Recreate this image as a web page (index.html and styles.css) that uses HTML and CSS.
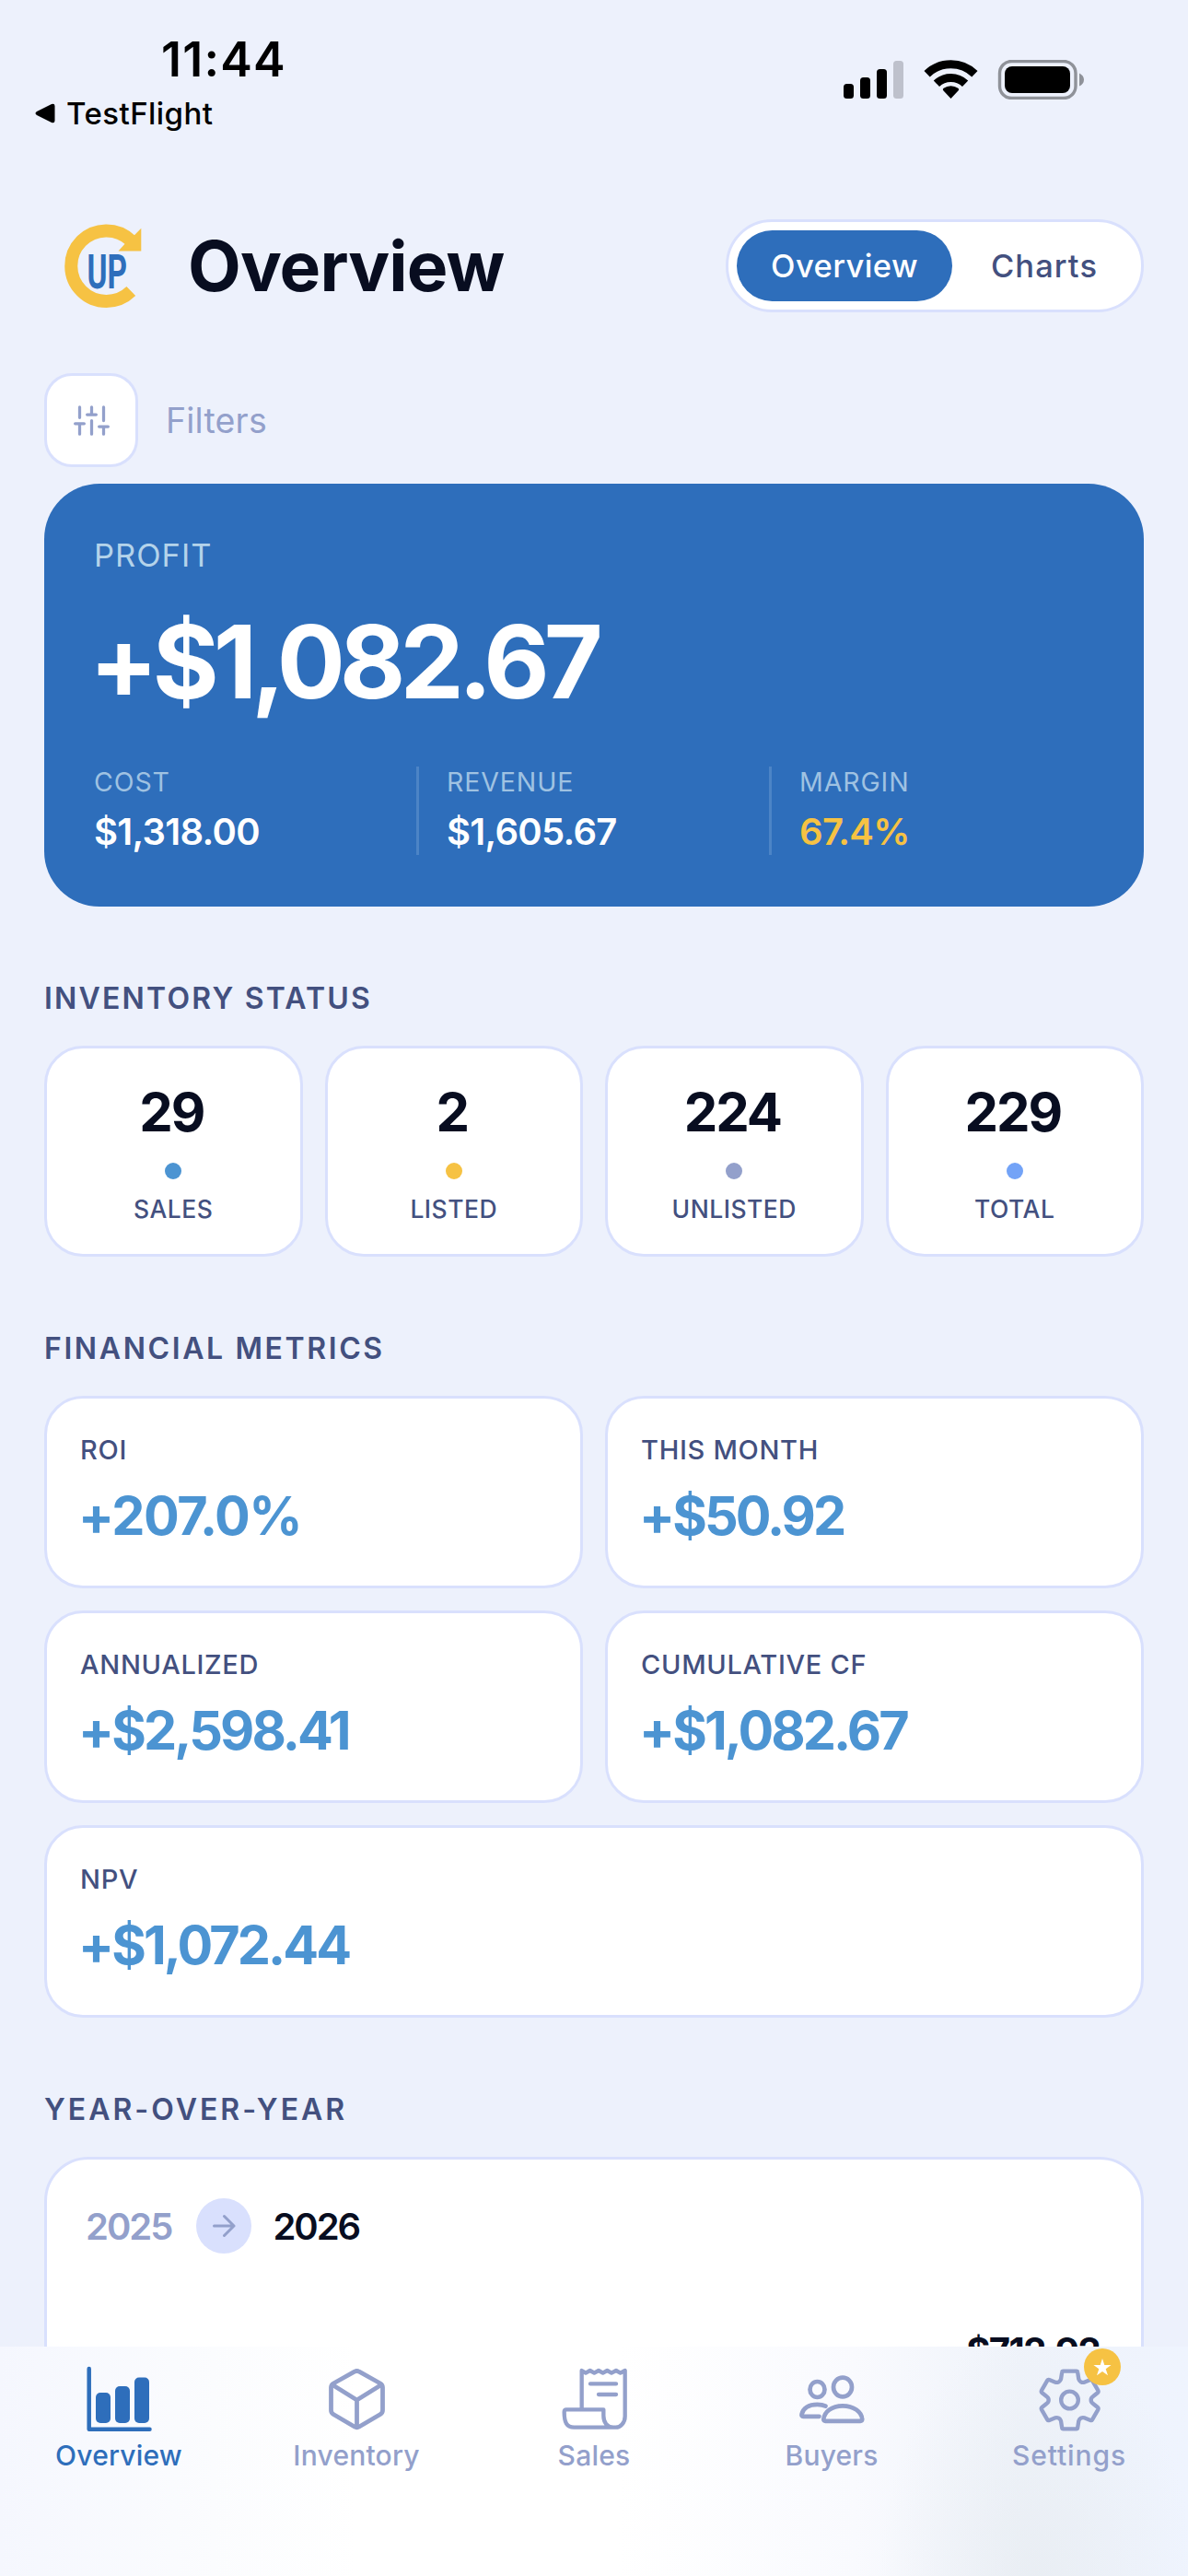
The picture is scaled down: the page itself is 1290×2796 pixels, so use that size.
FILE: index.html
```html
<!DOCTYPE html>
<html lang="en">
<head>
    <meta charset="UTF-8">
    <meta name="viewport" content="width=device-width, initial-scale=1.0">
    <title>Overview</title>
    <link rel="stylesheet" href="styles.css">
</head>
<body>
    <div class="screen">
        <div class="status-bar">
            <div class="status-left">
                <div class="status-time">11:44</div>
                <div class="status-back">
                    <svg width="22" height="22" viewBox="0 0 22 22"><path d="M2 9 L18 1 Q21.5 0 21.5 3 V19 Q21.5 22 18 21 L2 13 Q-1 11 2 9Z"/></svg>
                    <span>TestFlight</span>
                </div>
            </div>
            <svg class="status-icons" width="262" height="43" viewBox="0 0 262 43">
                <!-- signal -->
                <rect x="0" y="26" width="11" height="16" rx="3.5"/>
                <rect x="18" y="19" width="11" height="23" rx="3.5"/>
                <rect x="36" y="10" width="11" height="32" rx="3.5"/>
                <rect x="54" y="1" width="11" height="41" rx="3.5" fill="#bec1cc"/>
                <!-- wifi -->
                <path d="M90.6 15.2 A37.3 37.3 0 0 1 142.4 15.2" fill="none" stroke="#000" stroke-width="9"/>
                <path d="M100.9 25.8 A22.5 22.5 0 0 1 132.1 25.8" fill="none" stroke="#000" stroke-width="9"/>
                <path d="M116.5 42 L108.3 33.3 Q107 32 108.6 30.8 A13.3 13.3 0 0 1 124.4 30.8 Q126 32 124.7 33.3Z"/>
                <!-- battery -->
                <rect x="169.5" y="1.5" width="82.5" height="40" rx="13" fill="none" stroke="#8f9299" stroke-width="3.4"/>
                <rect x="175" y="7" width="71" height="29" rx="8"/>
                <path d="M256 14.5 Q261 17 261 21.5 Q261 26 256 28.5Z" fill="#8f9299"/>
            </svg>
        </div>

        <header class="header">
            <svg class="logo" width="96" height="96" viewBox="6 10.5 96 96">
                <path d="M82 30.5 A38.3 38.3 0 1 0 82.3 85.6" fill="none" stroke="#f6c243" stroke-width="14"/>
                <path d="M93.3 17.3 V42 H68.5 L75.3 34.5 L85.7 25Z" fill="#f6c243"/>
                <text class="logo-text" x="34.5" y="82.7" textLength="43.5" lengthAdjust="spacingAndGlyphs">UP</text>
            </svg>
            <h1 class="title">Overview</h1>
            <div class="segment">
                <button class="segment-btn active">Overview</button>
                <button class="segment-btn">Charts</button>
            </div>
        </header>

        <main class="content">
            <div class="filters">
                <button class="filter-btn" aria-label="Filters">
                    <svg width="39" height="39" viewBox="0 0 24 24" fill="none" stroke="currentColor" stroke-width="2" stroke-linecap="round">
                        <path d="M4 21v-7M4 10V3M12 21v-9M12 8V3M20 21v-5M20 12V3M1 14h6M9 8h6M17 16h6"/>
                    </svg>
                </button>
                <span class="filter-label">Filters</span>
            </div>

            <section class="profit-card">
                <div class="profit-label">PROFIT</div>
                <div class="profit-value">+$1,082.67</div>
                <div class="profit-stats">
                    <div class="stat">
                        <div class="stat-label">COST</div>
                        <div class="stat-value">$1,318.00</div>
                    </div>
                    <div class="stat">
                        <div class="stat-label">REVENUE</div>
                        <div class="stat-value">$1,605.67</div>
                    </div>
                    <div class="stat">
                        <div class="stat-label">MARGIN</div>
                        <div class="stat-value gold">67.4%</div>
                    </div>
                </div>
            </section>

            <h2 class="section-title">INVENTORY STATUS</h2>
            <div class="inventory">
                <div class="card inv-card">
                    <div class="inv-value">29</div>
                    <span class="dot dot-sales"></span>
                    <div class="inv-label">SALES</div>
                </div>
                <div class="card inv-card">
                    <div class="inv-value">2</div>
                    <span class="dot dot-listed"></span>
                    <div class="inv-label">LISTED</div>
                </div>
                <div class="card inv-card">
                    <div class="inv-value">224</div>
                    <span class="dot dot-unlisted"></span>
                    <div class="inv-label">UNLISTED</div>
                </div>
                <div class="card inv-card">
                    <div class="inv-value">229</div>
                    <span class="dot dot-total"></span>
                    <div class="inv-label">TOTAL</div>
                </div>
            </div>

            <h2 class="section-title wide">FINANCIAL METRICS</h2>
            <div class="metrics">
                <div class="card metric">
                    <div class="metric-label">ROI</div>
                    <div class="metric-value percent">+207.0%</div>
                </div>
                <div class="card metric">
                    <div class="metric-label">THIS MONTH</div>
                    <div class="metric-value">+$50.92</div>
                </div>
                <div class="card metric">
                    <div class="metric-label">ANNUALIZED</div>
                    <div class="metric-value">+$2,598.41</div>
                </div>
                <div class="card metric">
                    <div class="metric-label">CUMULATIVE CF</div>
                    <div class="metric-value">+$1,082.67</div>
                </div>
                <div class="card metric full">
                    <div class="metric-label">NPV</div>
                    <div class="metric-value">+$1,072.44</div>
                </div>
            </div>

            <h2 class="section-title wider">YEAR-OVER-YEAR</h2>
            <div class="card year-card">
                <div class="years">
                    <span class="year-prev">2025</span>
                    <span class="year-arrow">
                        <svg width="30" height="30" viewBox="0 0 30 30" fill="none" stroke="currentColor" stroke-width="3" stroke-linecap="round" stroke-linejoin="round">
                            <path d="M4.5 15H26M15.5 4.5L26 15L15.5 25.5"/>
                        </svg>
                    </span>
                    <span class="year-next">2026</span>
                </div>
                <div class="year-value">$712.92</div>
            </div>
        </main>

        <nav class="tab-bar">
            <a class="tab active">
                <svg class="tab-icon" viewBox="0 0 72 72">
                    <path d="M3.7 3V68.7H69.5" fill="none" stroke="currentColor" stroke-width="4.5" stroke-linecap="round" stroke-linejoin="round"/>
                    <rect x="11" y="29" width="16" height="33" rx="5" fill="currentColor"/>
                    <rect x="32" y="22" width="16" height="40" rx="5" fill="currentColor"/>
                    <rect x="53" y="12.5" width="16" height="49.5" rx="5" fill="currentColor"/>
                </svg>
                <span class="tab-label">Overview</span>
            </a>
            <a class="tab">
                <svg class="tab-icon" viewBox="0 0 72 72" fill="none" stroke="currentColor" stroke-width="4.8" stroke-linecap="round" stroke-linejoin="round">
                    <path d="M34 6.2q2.5-1.5 5 0L62 19q2.5 1.5 2.5 4.5V48q0 3-2.5 4.5L39 66q-2.5 1.5-5 0L11 52.5Q8.5 51 8.5 48V23.5Q8.5 20.5 11 19Z"/>
                    <path d="M10 20.5L36.5 37L63 20.5M36.5 37V66"/>
                </svg>
                <span class="tab-label">Inventory</span>
            </a>
            <a class="tab">
                <svg class="tab-icon" viewBox="57 84 216 216" fill="none" stroke="currentColor" stroke-width="13" stroke-linecap="round" stroke-linejoin="round">
                    <path d="M125 222V99L138 107L152 99L166 107L180 99L194 107L208 99L222 107L237 99L251 107L266 99V248C266 270 250 284 236 284H100C76 284 68 268 68 234Q68 226 75 226H196V246C196 268 208 284 228 284"/>
                    <path d="M153 142H237M180 177H237"/>
                </svg>
                <span class="tab-label">Sales</span>
            </a>
            <a class="tab">
                <svg class="tab-icon" viewBox="0 0 72 72" fill="none" stroke="currentColor" stroke-width="4.7" stroke-linecap="round" stroke-linejoin="round">
                    <ellipse cx="20.5" cy="25.5" rx="8" ry="8.5"/>
                    <ellipse cx="48" cy="23" rx="10" ry="10.3"/>
                    <path d="M27.3 58C28 50 36 43.3 48 43.3S69 50 69.2 58Q69.3 59.8 67.3 59.8H29.3Q27.2 59.8 27.3 58Z"/>
                    <path d="M22.5 54.8H5.2Q3 54.8 3.5 52.5C5 46 11 41.8 20.5 41.8Q26 41.8 29.5 43.6"/>
                </svg>
                <span class="tab-label">Buyers</span>
            </a>
            <a class="tab">
                <div class="tab-icon-wrap">
                    <svg class="tab-icon" viewBox="45 114 216 216" fill="none" stroke="currentColor" stroke-width="13" stroke-linejoin="round">
                        <path d="M134 131H176Q180 131 180.5 135L184 157Q186 163 191 166Q197 169 202 167L222 159Q226 157.5 228 161L247 194Q249 198 246 201L231 213Q224 218 224 225Q224 232 231 237L246 249Q249 252 247 256L228 289Q226 292.5 222 291L202 283Q197 281 191 284Q186 287 184 293L180.5 315Q180 319 176 319H134Q130 319 129.5 315L126 293Q124 287 119 284Q113 281 108 283L88 291Q84 292.5 82 289L63 256Q61 252 64 249L79 237Q86 232 86 225Q86 218 79 213L64 201Q61 198 63 194L82 161Q84 157.5 88 159L108 167Q113 169 119 166Q124 163 126 157L129.5 135Q130 131 134 131Z"/>
                        <circle cx="154.5" cy="225" r="28"/>
                    </svg>
                    <span class="badge">
                        <svg width="20" height="19" viewBox="0 0 20 19"><path d="M10 0L12.3 6.9H19.6L13.7 11.2L16 18.2L10 13.9L4 18.2L6.3 11.2L.4 6.9H7.7Z" fill="#fff"/></svg>
                    </span>
                </div>
                <span class="tab-label spaced">Settings</span>
            </a>
        </nav>
    </div>
</body>
</html>
```
FILE: styles.css
```css
* {
    box-sizing: border-box;
}

body {
    margin: 0;
    background: #edf1fc;
    font-family: Inter, "Liberation Sans", sans-serif;
    color: #080d20;
}

h1, h2 {
    margin: 0;
}

button {
    border: none;
    background: none;
    padding: 0;
    font-family: inherit;
}

svg {
    display: block;
}

.screen {
    position: relative;
    width: 1290px;
    height: 2796px;
    overflow: hidden;
}

/* Status bar */
.status-bar {
    display: flex;
    justify-content: space-between;
    height: 238px;
    padding: 35px 112px 0 38px;
    color: #000;
}

.status-time {
    margin-left: 137px;
    font-size: 52px;
    font-weight: 600;
    line-height: 60px;
    letter-spacing: 1.2px;
}

.status-back {
    display: flex;
    align-items: center;
    gap: 12px;
    margin-top: 8px;
    font-size: 33px;
    font-weight: 450;
    line-height: 40px;
    letter-spacing: 0.45px;
}

.status-icons {
    margin-top: 30px;
}

/* Header */
.header {
    display: flex;
    align-items: center;
    height: 101px;
    padding: 0 48px 0 66px;
}

.logo-text {
    font-family: Roboto, sans-serif;
    font-size: 52px;
    font-weight: 700;
    fill: #2e6ebb;
}

.title {
    margin-left: 42px;
    font-size: 75px;
    font-weight: 700;
    line-height: 90px;
    letter-spacing: -0.9px;
}

.segment {
    display: flex;
    width: 454px;
    height: 101px;
    margin-left: auto;
    padding: 9px;
    background: #fff;
    border: 3px solid #d9e0fd;
    border-radius: 50px;
}

.segment-btn {
    flex: 1;
    padding-left: 4px;
    border-radius: 39px;
    color: #43507f;
    font-size: 34.5px;
    font-weight: 550;
    letter-spacing: 1.1px;
}

.segment-btn.active {
    flex: 0 0 234px;
    padding-left: 0;
    background: #2e6ebb;
    color: #fff;
    letter-spacing: 0.4px;
}

/* Content */
.content {
    padding: 66px 48px 0;
}

.filters {
    display: flex;
    align-items: center;
    gap: 30px;
    color: #93a0cb;
}

.filter-btn {
    display: flex;
    align-items: center;
    justify-content: center;
    width: 102px;
    height: 102px;
    background: #fff;
    border: 3px solid #d9e0fd;
    border-radius: 30px;
    color: inherit;
}

.filter-label {
    font-size: 37.5px;
    letter-spacing: 0.2px;
}

.card {
    background: #fff;
    border: 3px solid #d9e0fd;
    border-radius: 42px;
}

/* Profit card */
.profit-card {
    height: 459px;
    margin-top: 18px;
    padding: 56px 54px 0;
    background: #2e6ebb;
    border-radius: 60px;
    color: #fff;
}

.profit-label {
    color: #b4d3ea;
    font-size: 34.5px;
    line-height: 44px;
    letter-spacing: 1px;
}

.profit-value {
    margin: 33px 0 0 -5px;
    font-size: 110px;
    font-weight: 700;
    line-height: 120px;
    letter-spacing: -6px;
}

.profit-stats {
    display: flex;
    margin-top: 54px;
}

.stat {
    flex: 0 0 350px;
    height: 96px;
}

.stat + .stat {
    flex-basis: 383px;
    padding-left: 30px;
    border-left: 3px solid #4c84c6;
}

.stat + .stat:last-child {
    flex: 1;
}

.stat-label {
    color: #9fc2e2;
    font-size: 28.5px;
    line-height: 34px;
    letter-spacing: 0.9px;
}

.stat-value {
    margin-top: 13px;
    font-size: 40px;
    font-weight: 600;
    line-height: 48px;
    letter-spacing: -0.7px;
}

.gold {
    color: #f6c243;
}

.section-title {
    margin: 80px 0 31px;
    color: #43507f;
    font-size: 32px;
    font-weight: 600;
    line-height: 40px;
    letter-spacing: 2.2px;
}

.section-title.wide {
    letter-spacing: 2.6px;
}

.section-title.wider {
    letter-spacing: 3px;
}

/* Inventory status */
.inventory {
    display: grid;
    grid-template-columns: repeat(4, 1fr);
    gap: 24px;
}

.inv-card {
    display: flex;
    flex-direction: column;
    align-items: center;
    height: 229px;
    padding-top: 34px;
}

.inv-value {
    margin-left: -4px;
    font-size: 58px;
    font-weight: 700;
    line-height: 70px;
    letter-spacing: -2.1px;
}

.dot {
    width: 18px;
    height: 18px;
    margin: 20px 0 16px;
    border-radius: 50%;
}

.dot-sales {
    background: #4c94d2;
}

.dot-listed {
    background: #f6c243;
}

.dot-unlisted {
    background: #93a0cb;
}

.dot-total {
    background: #73a3f7;
}

.inv-label {
    color: #43507f;
    font-size: 26.5px;
    font-weight: 450;
    line-height: 33px;
    letter-spacing: 0.5px;
}

/* Financial metrics */
.metrics {
    display: grid;
    grid-template-columns: 1fr 1fr;
    gap: 24px;
}

.metric {
    height: 209px;
    padding: 38px 35px 0;
}

.metric.full {
    grid-column: 1 / -1;
}

.metric-label {
    margin-left: 1px;
    color: #43507f;
    font-size: 29px;
    font-weight: 450;
    line-height: 36px;
    letter-spacing: 0.7px;
}

.metric-value {
    margin: 18px 0 0 -1px;
    color: #4c94d2;
    font-size: 57.5px;
    font-weight: 700;
    line-height: 70px;
    letter-spacing: -2.9px;
}

.metric-value.percent {
    letter-spacing: -1.5px;
}

/* Year over year */
.year-card {
    height: 600px;
    padding: 42px 45px 0 42px;
    border-radius: 48px;
}

.years {
    display: flex;
    align-items: center;
    font-size: 40px;
    font-weight: 600;
    letter-spacing: -2px;
}

.year-prev {
    color: #93a0cb;
}

.year-arrow {
    display: flex;
    align-items: center;
    justify-content: center;
    width: 60px;
    height: 60px;
    margin: 0 23px 0 27px;
    background: #d9e0fd;
    border-radius: 50%;
    color: #93a0cb;
}

.year-value {
    margin-top: 82px;
    font-size: 40px;
    font-weight: 700;
    line-height: 48px;
    letter-spacing: -1.6px;
    text-align: right;
}

.tab-bar {
    position: absolute;
    left: 0;
    right: 0;
    bottom: 0;
    display: flex;
    height: 249px;
    padding-top: 21px;
    background:
        radial-gradient(ellipse 170px 270px at 1125px 249px, rgba(230, 235, 240, 0.65), rgba(230, 235, 240, 0)),
        linear-gradient(90deg, #f5f7fe 0%, #fbfcfe 18%, #fff 30%, #fff 52%, #f9fafe 72%, #eff3fa 86%, #eff4fe 100%);
}

.tab {
    flex: 1;
    display: flex;
    flex-direction: column;
    align-items: center;
    color: #93a0cb;
}

.tab.active {
    color: #2e6ebb;
}

.tab-icon {
    width: 72px;
    height: 72px;
}

.tab-icon-wrap {
    position: relative;
}

.tab-label {
    margin-top: 5px;
    font-size: 30px;
    font-weight: 500;
    line-height: 40px;
    letter-spacing: 0.2px;
}

.tab-label.spaced {
    letter-spacing: 0.9px;
}

.badge {
    position: absolute;
    top: -19px;
    left: 52px;
    display: flex;
    align-items: center;
    justify-content: center;
    width: 40px;
    height: 40px;
    background: #f6c243;
    border-radius: 50%;
}
```
